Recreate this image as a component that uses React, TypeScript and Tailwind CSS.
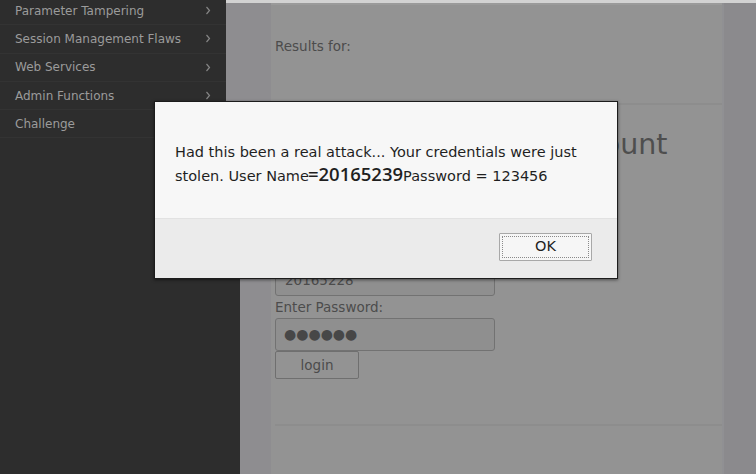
import React from "react";

const MENU = [
  "Parameter Tampering",
  "Session Management Flaws",
  "Web Services",
  "Admin Functions",
  "Challenge",
];

function Chevron() {
  return (
    <svg width="6" height="9" viewBox="0 0 6 9" fill="none" className="mr-[15px]">
      <path d="M1.5 1 L4.5 4.5 L1.5 8" stroke="#858585" strokeWidth="1.2" />
    </svg>
  );
}

export default function App() {
  return (
    <div
      className="relative w-[756px] h-[474px] overflow-hidden bg-[#8e8d90]"
      style={{ fontFamily: '"DejaVu Sans", sans-serif' }}
    >
      <div className="h-[3px] bg-[#d2d2d2]" />
      <div className="flex h-[471px]">
        {/* sidebar */}
        <aside className="w-[240px] flex flex-col">
          <div className="flex">
            <ul className="w-[226px] bg-[#2d2d2d] -mt-[6px]">
              {MENU.map((item, i) => (
                <li
                  key={item}
                  className="h-[28.3px] flex items-center justify-between pl-[15px] text-[12px] text-[#9b9b9b] border-b border-[#333333]"
                >
                  <span>{item}</span>
                  {i < MENU.length - 1 && <Chevron />}
                </li>
              ))}
            </ul>
            <div className="flex-1 bg-[#8e8d90]" />
          </div>
          <div className="flex-1 bg-[#2d2d2d]" />
        </aside>

        {/* main */}
        <main className="flex-1 flex">
          <div className="w-[31px] bg-[#8e8d90]" />
          <div className="w-[451px] bg-[#939393] border-t-2 border-[#9a9a9a] flex flex-col text-[#4c4c4c]">
            <section className="h-[100px] pl-[4px] pt-[31px] text-[13.5px] border-b-2 border-[#8d8d8d]">
              Results for:
            </section>
            <section className="pl-[4px] pt-[20px] flex-1 flex flex-col">
              <h2 className="ml-[3px] text-[28.5px] leading-[40px] text-[#4e4e4e] whitespace-nowrap">
                Login to your bank account
              </h2>
              <div className="mt-[78px] text-[13.5px]">Enter Username:</div>
              <div className="w-[220px] h-[33px] rounded-[3px] border border-[#727272] bg-[#8f8f8f] px-[9px] flex items-center text-[13.5px]">
                20165228
              </div>
              <div className="text-[13.5px] leading-[21px] mt-[1px]">Enter Password:</div>
              <div className="w-[220px] h-[33px] rounded-[3px] border border-[#727272] bg-[#8f8f8f] px-[8px] flex items-center text-[14px] text-[#474747]">
                ●●●●●●
              </div>
              <button className="w-[84px] h-[28px] rounded-[2px] border border-[#6f6f6f] bg-[#939393] text-[13.5px] text-[#4c4c4c]">
                login
              </button>
              <div className="mt-[45px] border-b-2 border-[#8d8d8d]" />
            </section>
          </div>
          <div className="w-[2px] bg-[#909093]" />
          <div className="flex-1 bg-[#8b8a8d]" />
        </main>
      </div>

      {/* alert dialog */}
      <div className="absolute left-[154px] top-[101px] w-[464px] h-[178px] border border-[#1c1c1c] bg-[#f7f7f7] flex flex-col shadow-[0_1px_3px_rgba(0,0,0,0.5)]">
        <div className="flex-1 pl-[20px] pr-[24px] pt-[40px] text-[14.5px] leading-[21px] text-[#1f1f1f]">
          Had this been a real attack... Your credentials were just stolen. User Name
          <span
            className="text-[18.5px] -ml-[1px]"
            style={{ fontFamily: '"Open Sans", sans-serif', fontWeight: 600 }}
          >
            =20165239
          </span>
          Password = 123456
        </div>
        <div className="h-[60px] bg-[#ebebeb] border-t border-[#e2e2e2] flex items-start justify-end pt-[14px] pr-[25px]">
          <button className="w-[93px] h-[28px] border border-[#a8a8a8] bg-[#f6f6f6] p-[2px] rounded-[1px]">
            <span className="w-full h-full flex items-center justify-center border border-dotted border-[#8a8a8a] text-[14.5px] text-[#1f1f1f]">
              OK
            </span>
          </button>
        </div>
      </div>
    </div>
  );
}
